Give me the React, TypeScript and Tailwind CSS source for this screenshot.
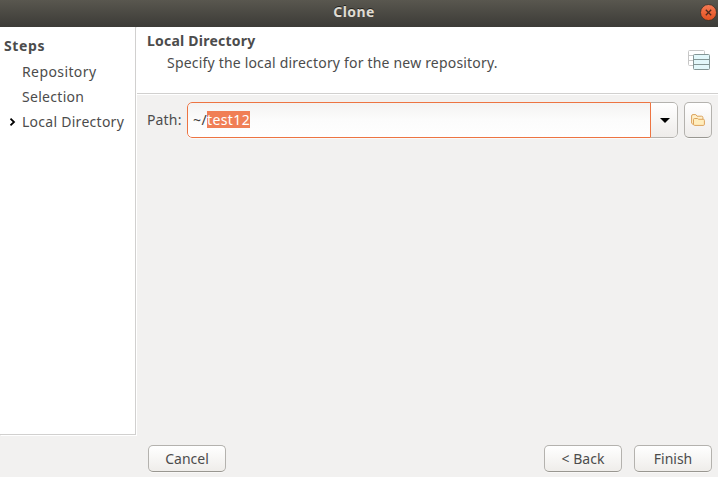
import type { ReactNode } from "react";

function Button({ children, className = "" }: { children: ReactNode; className?: string }) {
  return (
    <button
      className={`flex h-[27px] w-[78px] items-center justify-center rounded-[5px] border border-[#b4b2ae] border-b-[#999791] bg-linear-to-b from-white to-[#efedea] pb-px text-[14px] text-[#4c4c4c] shadow-[0_1px_0_#f9f8f7] ${className}`}
    >
      {children}
    </button>
  );
}

function TitleBar() {
  return (
    <header className="grid h-[27px] shrink-0 grid-cols-[1fr_auto_1fr] items-center bg-linear-to-b from-[#59574f] to-[#3c3b37] pr-px">
      <span />
      <h1 className="-mt-[3px] pr-[9px] text-[14px] leading-5 font-bold tracking-[0.4px] text-[#dfdbd2] [text-shadow:0_-1px_0_#24231f]">Clone</h1>
      <button aria-label="Close" className="-mt-[3px] justify-self-end">
        <svg width="17" height="17" viewBox="0 0 17 17" className="block">
          <defs>
            <linearGradient id="close" x2="0" y2="1">
              <stop stopColor="#f57b55" />
              <stop offset="1" stopColor="#e2501f" />
            </linearGradient>
          </defs>
          <circle cx="8.5" cy="8.5" r="8" fill="url(#close)" stroke="#343029" strokeWidth=".8" />
          <path d="M5.8 5.8 11.2 11.2M11.2 5.8 5.8 11.2" stroke="#4b291c" strokeWidth="1.3" />
        </svg>
      </button>
    </header>
  );
}

function Steps() {
  return (
    <aside className="h-[408px] w-[136px] shrink-0 border-r border-b border-[#d1d0cf] bg-white pt-[6px] shadow-[1px_1px_0_#fff]">
      <h2 className="pl-1 text-[14px] leading-[25px] font-bold tracking-[0.6px]">Steps</h2>
      <ol className="text-[14px] leading-[25px]">
        <li className="pt-px pl-[22px] tracking-[0.4px]">Repository</li>
        <li className="pl-[22px] tracking-[0.3px]">Selection</li>
        <li className="flex items-center tracking-[0.27px] whitespace-nowrap">
          <svg width="22" height="10" viewBox="0 0 22 10" className="shrink-0">
            <path d="M10.5 1.6 14 5 10.5 8.4" fill="none" stroke="#000" strokeWidth="1.8" />
          </svg>
          Local Directory
        </li>
      </ol>
    </aside>
  );
}

function RepositoryIcon() {
  return (
    <svg width="23" height="21" viewBox="0 0 23 21" className="mt-[23px] mr-[7px] shrink-0">
      <rect x=".5" y=".5" width="16" height="15" rx="1" fill="#fff" stroke="#c7c7c7" />
      <path d="M1 5.5h15M1 10.5h15" stroke="#c7c7c7" />
      <rect x="5.5" y="4.5" width="16" height="15" rx="1" fill="#e2f7fa" stroke="#849696" />
      <path d="M6 9.5h15M6 14.5h15" stroke="#849696" />
    </svg>
  );
}

function PathRow() {
  return (
    <div className="flex h-9 items-center pl-[11px] text-[14px]">
      <label className="w-[40px] pb-[2px] tracking-[0.15px] whitespace-nowrap">Path:</label>
      <div className="flex h-9 w-[491px] overflow-hidden rounded-[5px] shadow-[0_1px_0_#fafafa]">
        <div className="flex w-[464px] items-center rounded-l-[5px] border border-[#ed7442] bg-linear-to-b from-[#f4f3f2] via-[#fcfcfc] to-white pb-px pl-[5px] text-[#3c3c3c]">
          <span className="w-[14px] tracking-[0.5px] whitespace-nowrap">~/</span>
          <span className="h-[17px] w-[43px] bg-[#f07f56] leading-[17px] tracking-[0.4px] whitespace-nowrap text-white">test12</span>
        </div>
        <button aria-label="Show paths" className="flex flex-1 items-center justify-center rounded-r-[5px] border border-l-0 border-[#b4b2ae] bg-linear-to-b from-white to-[#eeecea]">
          <svg width="10" height="5" viewBox="0 0 10 5" className="mt-[1px] ml-[2px]">
            <path d="M0 0h10L5 5Z" fill="#000" />
          </svg>
        </button>
      </div>
      <button aria-label="Browse" className="ml-[6px] flex h-9 w-7 items-center justify-center rounded-[5px] border border-[#b4b2ae] border-b-[#999791] bg-linear-to-b from-white to-[#eeecea] shadow-[0_1px_0_#fafafa]">
        <svg width="14" height="12" viewBox="0 0 14 12">
          <path d="M2.5 11 .6 9V2Q.6.6 2 .6H4.8L6 2.2H10.6Q11.9 2.2 11.9 3.5V5" fill="#fff0cb" stroke="#dca35c" />
          <path d="M2.5 10.2V5.6Q2.5 4.5 3.5 4.5H6.6L7.6 5.3H12.3Q13.4 5.3 13.4 6.4V10.3Q13.4 11.4 12.3 11.4H3.6Q2.5 11.4 2.5 10.2Z" fill="#ffedbd" stroke="#dca35c" />
        </svg>
      </button>
    </div>
  );
}

export default function App() {
  return (
    <div className="flex h-[477px] w-[718px] flex-col overflow-hidden bg-[#f2f1f0] font-['Noto_Sans','Open_Sans',sans-serif] text-[#4c4c4c]">
      <TitleBar />
      <div className="flex h-[408px] shrink-0">
        <Steps />
        <main className="min-w-0 flex-1">
          <section className="ml-px flex h-[67px] justify-between border-b border-[#d1d0cf] bg-white shadow-[0_1px_0_#fff]">
            <div className="pt-[3px] pl-[10px]">
              <h2 className="text-[14px] leading-[22px] font-bold tracking-[0.22px] whitespace-nowrap">Local Directory</h2>
              <p className="pl-5 text-[14px] leading-[22px] tracking-[0.19px] whitespace-nowrap">Specify the local directory for the new repository.</p>
            </div>
            <RepositoryIcon />
          </section>
          <div className="pt-2">
            <PathRow />
          </div>
        </main>
      </div>
      <footer className="flex pt-[10px] pl-[148px]">
        <Button>Cancel</Button>
        <Button className="ml-[318px]">&lt; Back</Button>
        <Button className="ml-3">Finish</Button>
      </footer>
    </div>
  );
}
